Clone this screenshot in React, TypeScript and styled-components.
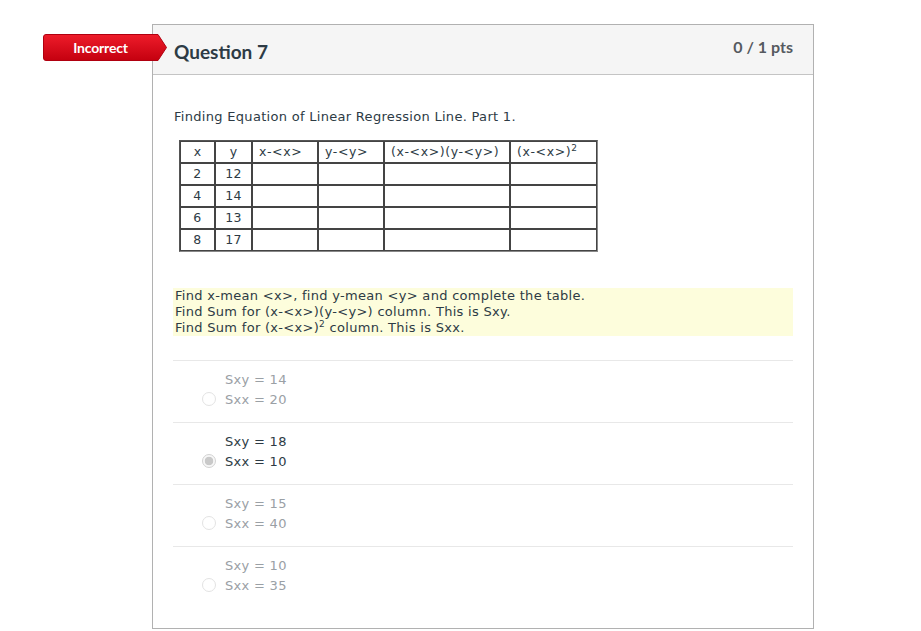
import styled, { createGlobalStyle } from "styled-components";

const GlobalStyle = createGlobalStyle`
  html, body {
    margin: 0;
    padding: 0;
    background: #ffffff;
  }
  body {
    font-family: "DejaVu Sans", Verdana, sans-serif;
  }
`;

const Page = styled.div`
  padding: 24px 0 0 152px;
`;

const Card = styled.div`
  position: relative;
  width: 662px;
  box-sizing: border-box;
  border: 1px solid #b1b1b1;
  background: #ffffff;
`;

const Banner = styled.div`
  position: absolute;
  left: -110px;
  top: 9px;
  width: 124px;
  height: 27px;
`;

const BannerLabel = styled.span`
  position: absolute;
  left: 0;
  top: 0;
  width: 115px;
  height: 27px;
  display: flex;
  align-items: center;
  justify-content: center;
  font-family: Lato, "Liberation Sans", sans-serif;
  font-weight: 700;
  font-size: 14px;
  color: #ffffff;
  letter-spacing: -0.2px;
`;

const Header = styled.div`
  display: flex;
  justify-content: space-between;
  height: 49px;
  background: #f5f5f5;
  border-bottom: 1px solid #c4c4c4;
  padding: 0 20px 0 21px;
`;

const Title = styled.h2`
  margin: 15px 0 0;
  font-family: Lato, "Liberation Sans", sans-serif;
  font-weight: 700;
  font-size: 19px;
  line-height: 24px;
  color: #2d3b45;
`;

const Points = styled.div`
  margin-top: 10px;
  font-family: Lato, "Liberation Sans", sans-serif;
  font-weight: 700;
  font-size: 16px;
  line-height: 24px;
  color: #555a5f;
`;

const Body = styled.div`
  padding: 34px 20px 20px 20px;
`;

const Prompt = styled.p`
  margin: 0 0 0 1px;
  font-size: 13px;
  letter-spacing: 0.3px;
  line-height: 16px;
  color: #2d3b45;
`;

const DataTable = styled.table`
  margin: 15px 0 0 6px;
  border-collapse: separate;
  border-spacing: 0;
  border: 1px solid #555;
  border-right-color: #888;
  border-bottom-color: #888;
`;

const Cell = styled.td<{ $w: number; $head?: boolean }>`
  width: ${(p) => p.$w}px;
  box-sizing: border-box;
  height: 22px;
  padding: 0 ${(p) => (p.$head ? "2px 0 6px" : "2px")};
  border: 1px solid #444;
  font-size: 12.5px;
  letter-spacing: ${(p) => (p.$head ? "0.6px" : "0.3px")};
  line-height: 16px;
  color: #2d3b45;
  text-align: ${(p) => (p.$head ? "left" : "center")};
  vertical-align: middle;
  white-space: nowrap;
`;

const Sup = styled.sup`
  font-size: 9px;
  line-height: 0;
`;

const Note = styled.div`
  margin-top: 36px;
  background: #fdfddc;
  padding: 0 2px;
  font-size: 13px;
  letter-spacing: 0.3px;
  line-height: 16px;
  color: #2d3b45;
`;

const Answers = styled.div`
  margin-top: 24px;
`;

const Answer = styled.div`
  display: flex;
  align-items: flex-end;
  border-top: 1px solid #e8e8e8;
  padding: 9px 0 12px 29px;
`;

const Radio = styled.span<{ $checked?: boolean }>`
  width: 12px;
  height: 12px;
  border-radius: 50%;
  border: 1px solid ${(p) => (p.$checked ? "#d2d2d2" : "#e3e3e3")};
  background: ${(p) =>
    p.$checked
      ? "radial-gradient(circle, #c9c9c9 0 4px, #f7f7f7 4.6px)"
      : "#fff"};
  margin: 0 9px 4px 0;
  flex-shrink: 0;
`;

const AnswerText = styled.div<{ $checked?: boolean }>`
  font-size: 13px;
  letter-spacing: 0.3px;
  line-height: 20px;
  color: ${(p) => (p.$checked ? "#2d3b45" : "#9aa0a5")};
`;

const rows = [
  [2, 12],
  [4, 14],
  [6, 13],
  [8, 17],
];

const widths = [35, 37, 66, 66, 126, 87];

const answers = [
  { sxy: 14, sxx: 20, checked: false },
  { sxy: 18, sxx: 10, checked: true },
  { sxy: 15, sxx: 40, checked: false },
  { sxy: 10, sxx: 35, checked: false },
];

function IncorrectBanner() {
  return (
    <Banner>
      <svg width="124" height="27" viewBox="0 0 124 27">
        <defs>
          <linearGradient id="red" x1="0" y1="0" x2="0" y2="1">
            <stop offset="0" stopColor="#ee1c2a" />
            <stop offset="1" stopColor="#c4000f" />
          </linearGradient>
        </defs>
        <path
          d="M3 0.5 H115 L123.5 13.5 L115 26.5 H3 Q0.5 26.5 0.5 24 V3 Q0.5 0.5 3 0.5 Z"
          fill="url(#red)"
          stroke="#b00010"
          strokeWidth="1"
        />
      </svg>
      <BannerLabel>Incorrect</BannerLabel>
    </Banner>
  );
}

export default function App() {
  return (
    <Page>
      <GlobalStyle />
      <Card>
        <IncorrectBanner />
        <Header>
          <Title>Question 7</Title>
          <Points>0 / 1 pts</Points>
        </Header>
        <Body>
          <Prompt>Finding Equation of Linear Regression Line. Part 1.</Prompt>
          <DataTable>
            <tbody>
              <tr>
                <Cell $w={widths[0]}>x</Cell>
                <Cell $w={widths[1]}>y</Cell>
                <Cell $w={widths[2]} $head>x-&lt;x&gt;</Cell>
                <Cell $w={widths[3]} $head>y-&lt;y&gt;</Cell>
                <Cell $w={widths[4]} $head>(x-&lt;x&gt;)(y-&lt;y&gt;)</Cell>
                <Cell $w={widths[5]} $head>
                  (x-&lt;x&gt;)<Sup>2</Sup>
                </Cell>
              </tr>
              {rows.map(([x, y]) => (
                <tr key={x}>
                  <Cell $w={widths[0]}>{x}</Cell>
                  <Cell $w={widths[1]}>{y}</Cell>
                  <Cell $w={widths[2]} />
                  <Cell $w={widths[3]} />
                  <Cell $w={widths[4]} />
                  <Cell $w={widths[5]} />
                </tr>
              ))}
            </tbody>
          </DataTable>
          <Note>
            Find x-mean &lt;x&gt;, find y-mean &lt;y&gt; and complete the table.
            <br />
            Find Sum for (x-&lt;x&gt;)(y-&lt;y&gt;) column. This is Sxy.
            <br />
            Find Sum for (x-&lt;x&gt;)<Sup>2</Sup> column. This is Sxx.
          </Note>
          <Answers>
            {answers.map((a) => (
              <Answer key={a.sxy}>
                <Radio $checked={a.checked} />
                <AnswerText $checked={a.checked}>
                  Sxy = {a.sxy}
                  <br />
                  Sxx = {a.sxx}
                </AnswerText>
              </Answer>
            ))}
          </Answers>
        </Body>
      </Card>
    </Page>
  );
}
